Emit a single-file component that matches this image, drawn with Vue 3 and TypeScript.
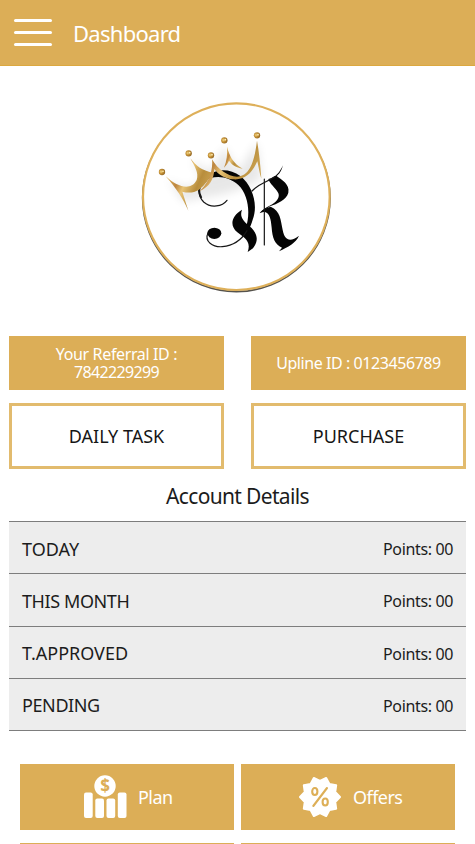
<script setup lang="ts">
interface AccountRow {
  label: string
  points: string
  tight: boolean
}

const rows: AccountRow[] = [
  { label: 'TODAY', points: '00', tight: false },
  { label: 'THIS MONTH', points: '00', tight: true },
  { label: 'T.APPROVED', points: '00', tight: false },
  { label: 'PENDING', points: '00', tight: true },
]

const jewels: [number, number][] = [[81, 231], [161, 175], [228, 181], [268, 136], [366, 121]]

// Ten-pointed badge outline centred on 21,21
const badgePoints: string = Array.from({ length: 20 }, (_, i) => {
  const r = i % 2 === 0 ? 20 : 16
  const a = (i * Math.PI) / 10
  return `${(21 + r * Math.cos(a)).toFixed(2)},${(21 + r * Math.sin(a)).toFixed(2)}`
}).join(' ')
</script>

<template>
  <div class="screen">
    <header class="topbar">
      <button class="menu" aria-label="Menu"><i></i><i></i><i></i></button>
      <h1>Dashboard</h1>
    </header>

    <section class="brand">
      <svg class="logo" viewBox="0 0 615 615">
        <defs>
          <linearGradient id="gold" x1="0" y1="0" x2="1" y2="0.5">
            <stop offset="0" stop-color="#a8822f" />
            <stop offset="0.2" stop-color="#d9ad55" />
            <stop offset="0.38" stop-color="#bd8640" />
            <stop offset="0.52" stop-color="#e8c375" />
            <stop offset="0.75" stop-color="#b88d3c" />
            <stop offset="1" stop-color="#cda554" />
          </linearGradient>
          <radialGradient id="jewel" cx="0.35" cy="0.45" r="0.7">
            <stop offset="0" stop-color="#f4d684" />
            <stop offset="0.45" stop-color="#c28e33" />
            <stop offset="1" stop-color="#8c6224" />
          </radialGradient>
          <filter id="soft" x="-30%" y="-30%" width="160%" height="160%">
            <feGaussianBlur stdDeviation="14" />
          </filter>
          <filter id="ring" x="-5%" y="-5%" width="110%" height="110%">
            <feGaussianBlur stdDeviation="2" />
          </filter>
        </defs>
        <circle cx="304" cy="309" r="281" fill="none" stroke="#56534d" stroke-width="5" filter="url(#ring)" />
        <circle cx="304" cy="305" r="280" fill="#fff" stroke="#deb05a" stroke-width="6.5" />
        <path d="M92 245Q150 300 203 255L166 190L225 230L268 155L310 230L366 140L380 250Q300 300 190 310L145 320Z" fill="#000" opacity="0.09" filter="url(#soft)" />

        <g fill="#050505">
          <path d="M207 260C223 222 278 214 316 243C354 273 370 331 353 374C350 386 344 399 337 410L332 400C347 356 341 300 310 270C285 246 238 235 207 260Z" />
          <path d="M321 344C313 366 325 378 343 393C367 413 373 436 354 460L338 471C350 438 326 427 307 412C282 391 290 362 321 344Z" />
          <ellipse cx="238" cy="415" rx="21" ry="17" />
          <path d="M444 211C438 231 433 237 425 243C440 255 465 267 460 293C455 314 426 326 405 334L374 355C385 340 402 335 416 325C431 314 435 301 428 291C422 280 404 266 400 252C423 247 434 232 444 211Z" />
          <path d="M374 354Q387 339 407 335C436 347 437 374 443 405C449 437 466 442 492 422C482 445 460 455 432 469L441 458C419 447 412 428 410 398C408 372 404 354 388 350Z" />
        </g>
        <g fill="none" stroke="#171717" stroke-width="3.6" stroke-linecap="round">
          <path d="M212 259C190 269 186 301 206 321C229 341 262 334 276 316" />
          <path d="M219 414C207 439 233 457 262 455C298 452 319 436 336 407" />
          <path d="M351 288C370 266 394 263 419 245" />
          <path d="M388 252V450" />
        </g>
        <path d="M208 258C190 271 189 290 199 309" fill="none" stroke="#171717" stroke-width="6" />

        <g fill="url(#gold)">
          <path d="M92 244C130 279 169 287 185 255C192 233 179 215 166 190C184 214 201 227 233 233C223 251 210 270 192 284C175 295 158 294 142 290L160 347C143 309 123 279 92 244Z" />
          <path d="M231 193C248 223 278 244 306 245C344 243 358 201 366 137C372 169 376 208 379 251C373 234 371 215 367 199C350 236 329 256 294 253C269 251 250 239 238 222C237 251 224 276 193 289C218 268 235 229 231 193Z" />
          <path d="M276 155C283 184 297 207 323 221C302 218 290 208 282 197C278 205 274 211 267 218C275 198 278 177 276 155Z" />
        </g>
        <g v-for="([x, y], i) in jewels" :key="i">
          <circle :cx="x" :cy="y" r="9.5" fill="url(#jewel)" />
          <circle :cx="x + 3" :cy="y - 2" r="2.5" fill="#fff0b8" />
        </g>
      </svg>
    </section>

    <section class="pair">
      <div class="info">
        <span class="ref">Your Referral ID :</span>
        <span class="number">7842229299</span>
      </div>
      <div class="info"><span class="upline">Upline ID : 0123456789</span></div>
      <button class="action">DAILY TASK</button>
      <button class="action">PURCHASE</button>
    </section>

    <h2>Account Details</h2>
    <ul class="account">
      <li v-for="row in rows" :key="row.label">
        <span :class="{ tight: row.tight }">{{ row.label }}</span>
        <span class="points">Points: {{ row.points }}</span>
      </li>
    </ul>

    <nav class="tiles">
      <a class="tile plan">
        <svg width="44" height="44" viewBox="0 0 44 44" fill="#fff">
          <rect x="1" y="17.5" width="8.7" height="25.5" rx="2" />
          <rect x="12.3" y="23.5" width="8.7" height="19.5" rx="2" />
          <rect x="23.5" y="23.5" width="8.7" height="19.5" rx="2" />
          <rect x="34.8" y="17.5" width="8.7" height="25.5" rx="2" />
          <circle cx="22" cy="11" r="10.7" />
          <text x="22" y="17" text-anchor="middle" class="dollar">$</text>
        </svg>
        <span>Plan</span>
      </a>
      <a class="tile offers">
        <svg width="42" height="42" viewBox="0 0 42 42">
          <polygon :points="badgePoints" fill="#fff" stroke="#fff" stroke-width="2" stroke-linejoin="round" />
          <g fill="none" stroke="#ddaf57" stroke-width="2.1">
            <ellipse cx="15.8" cy="15.5" rx="2.6" ry="3.5" />
            <ellipse cx="26.2" cy="26" rx="2.6" ry="3.5" />
            <path d="M28 12L14.3 30" stroke-linecap="round" />
          </g>
        </svg>
        <span>Offers</span>
      </a>
      <a class="tile"></a>
      <a class="tile"></a>
    </nav>
  </div>
</template>

<style>
body {
  margin: 0;
  overflow: hidden;
}
</style>

<style scoped>
.screen {
  width: 475px;
  height: 844px;
  overflow: hidden;
  background: #fff;
  color: #1c1c1c;
  font-family: 'Noto Sans', sans-serif;
}
.topbar {
  box-sizing: border-box;
  height: 66px;
  display: flex;
  align-items: center;
  gap: 21px;
  padding: 0 14px;
  background: #dcae57;
  border-bottom: 1px solid #dca83f;
}
.menu {
  display: flex;
  flex-direction: column;
  gap: 9px;
  width: 38px;
  padding: 0;
  border: 0;
  background: none;
}
.menu i {
  height: 3.3px;
  border-radius: 2px;
  background: #fff;
}
h1 {
  margin: 0;
  color: #fff;
  font-size: 22px;
  font-weight: 400;
  letter-spacing: -0.72px;
}
.brand {
  display: flex;
  padding: 29px 0 0 135px;
  height: 241px;
}
.logo {
  width: 205px;
  height: 205px;
}
.pair {
  display: grid;
  grid-template-columns: 215px 215px;
  grid-template-rows: 54px 66px;
  gap: 13px 27px;
  padding: 0 9px;
}
.info {
  display: flex;
  flex-direction: column;
  align-items: center;
  justify-content: center;
  background: #dcae57;
  color: #fff;
  font-size: 16px;
  line-height: 18.5px;
}
.ref {
  letter-spacing: -0.36px;
}
.number {
  letter-spacing: -0.64px;
}
.upline {
  letter-spacing: -0.43px;
}
.action {
  box-sizing: border-box;
  padding: 0;
  border: 3px solid #e2bb6e;
  background: #fff;
  color: #161616;
  font: 400 18px 'Noto Sans', sans-serif;
}
h2 {
  margin: 0;
  height: 52px;
  line-height: 54px;
  font-size: 21px;
  font-weight: 400;
  letter-spacing: -0.66px;
  text-align: center;
}
.account {
  margin: 0 9px;
  padding: 0;
  list-style: none;
  border-top: 1px solid #7d7d7d;
  background: #ededed;
}
.account li {
  box-sizing: border-box;
  height: 52.25px;
  display: flex;
  align-items: center;
  justify-content: space-between;
  padding: 2px 13px 0;
  border-bottom: 1px solid #7d7d7d;
  font-size: 18px;
}
.tight {
  letter-spacing: -0.4px;
}
.account .points {
  font-size: 16px;
  letter-spacing: -0.36px;
  padding-top: 1px;
}
.tiles {
  display: grid;
  grid-template-columns: 214px 214px;
  grid-auto-rows: 66px;
  gap: 13px 7px;
  padding: 33px 20px 0;
}
.tile {
  display: flex;
  align-items: center;
  background: #dcae57;
  color: #fff;
  font-size: 18px;
  letter-spacing: -0.55px;
}
.plan {
  gap: 11px;
  padding-left: 63px;
}
.offers {
  gap: 12px;
  padding-left: 58px;
}
.dollar {
  font: 700 17px 'Noto Sans', sans-serif;
  letter-spacing: 0;
  fill: #dcae57;
}
</style>
